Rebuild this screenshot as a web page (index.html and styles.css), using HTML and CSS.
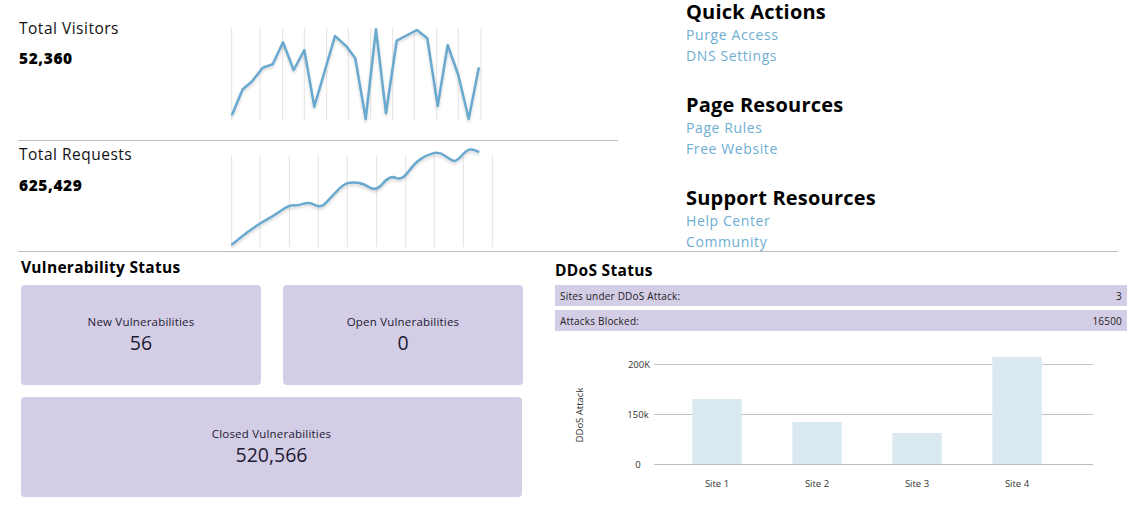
FILE: index.html
```html
<!DOCTYPE html>
<html>
<head>
<meta charset="utf-8">
<link rel="stylesheet" href="styles.css">
</head>
<body>
<div class="top">
  <div class="metrics">
    <div class="metric metric-visitors">
      <div class="info">
        <div class="metric-label">Total Visitors</div>
        <div class="metric-value">52,360</div>
      </div>
      <svg class="spark spark-1" width="260" height="100" viewBox="0 0 260 100">
        <defs>
          <filter id="sh1" x="-10%" y="-10%" width="120%" height="130%">
            <feGaussianBlur in="SourceAlpha" stdDeviation="1.5"/>
            <feOffset dy="2"/>
            <feComponentTransfer><feFuncA type="linear" slope="0.18"/></feComponentTransfer>
            <feMerge><feMergeNode/><feMergeNode in="SourceGraphic"/></feMerge>
          </filter>
        </defs>
        <g class="grid">
          <line x1="5.7" y1="3" x2="5.7" y2="95"/>
          <line x1="34" y1="3" x2="34" y2="95"/>
          <line x1="56.7" y1="3" x2="56.7" y2="95"/>
          <line x1="78.3" y1="3" x2="78.3" y2="95"/>
          <line x1="100.7" y1="3" x2="100.7" y2="95"/>
          <line x1="122.3" y1="3" x2="122.3" y2="95"/>
          <line x1="144.7" y1="3" x2="144.7" y2="95"/>
          <line x1="166.7" y1="3" x2="166.7" y2="95"/>
          <line x1="188.3" y1="3" x2="188.3" y2="95"/>
          <line x1="210.7" y1="3" x2="210.7" y2="95"/>
          <line x1="232.3" y1="3" x2="232.3" y2="95"/>
          <line x1="255" y1="3" x2="255" y2="95"/>
        </g>
        <polyline class="trend" filter="url(#sh1)" points="6.3,89.3 16.7,64.3 25.7,56.7 36.7,42.7 46.7,39.3 57,17.3 67.7,45 78.3,25 88.3,81.7 109,11 120.7,21.7 129.3,33.3 139.7,94 150,4.3 160,88.3 170.7,15.7 191,5 201.3,13.3 211.7,81 221.7,20 232.3,50 242.7,94 252.7,43.3"/>
      </svg>
    </div>
    <div class="metric metric-requests">
      <div class="info">
        <div class="metric-label">Total Requests</div>
        <div class="metric-value">625,429</div>
      </div>
      <svg class="spark spark-2" width="270" height="105" viewBox="0 0 270 105">
        <defs>
          <filter id="sh2" x="-10%" y="-10%" width="120%" height="130%">
            <feGaussianBlur in="SourceAlpha" stdDeviation="1.5"/>
            <feOffset dy="2"/>
            <feComponentTransfer><feFuncA type="linear" slope="0.18"/></feComponentTransfer>
            <feMerge><feMergeNode/><feMergeNode in="SourceGraphic"/></feMerge>
          </filter>
        </defs>
        <g class="grid">
          <line x1="5.7" y1="10" x2="5.7" y2="102"/>
          <line x1="34" y1="10" x2="34" y2="102"/>
          <line x1="63.3" y1="10" x2="63.3" y2="102"/>
          <line x1="92.3" y1="10" x2="92.3" y2="102"/>
          <line x1="121.3" y1="10" x2="121.3" y2="102"/>
          <line x1="150.7" y1="10" x2="150.7" y2="102"/>
          <line x1="179.7" y1="10" x2="179.7" y2="102"/>
          <line x1="208.3" y1="10" x2="208.3" y2="102"/>
          <line x1="237.3" y1="10" x2="237.3" y2="102"/>
          <line x1="266.3" y1="10" x2="266.3" y2="102"/>
        </g>
        <path class="trend" filter="url(#sh2)" d="M6.3 99.3 Q17.3 90 25.65 84.15 Q34 78.3 40.65 74.65 Q47.3 71 55.3 65.5 Q63.3 60 67.8 60.35 Q72.3 60.7 77.8 58.7 Q83.3 56.7 89 60 Q94.7 63.3 99.35 58.3 Q104 53.3 110.65 46.3 Q117.3 39.3 121.5 38.15 Q125.7 37 131.5 37.65 Q137.3 38.3 143.65 42.5 Q150 46.7 157 38.35 Q164 30 169.85 32.85 Q175.7 35.7 182.35 26.7 Q189 17.7 194.85 13.85 Q200.7 10 206.85 8.35 Q213 6.7 218.5 10.5 Q224 14.3 227 15.65 Q230 17 235.35 11 Q240.7 5 243.7 4.5 Q246.7 4 252.3 6.7"/>
      </svg>
    </div>
  </div>
  <div class="resources">
    <section class="res-group">
      <h2 class="res-title">Quick Actions</h2>
      <a class="res-link">Purge Access</a>
      <a class="res-link">DNS Settings</a>
    </section>
    <section class="res-group">
      <h2 class="res-title">Page Resources</h2>
      <a class="res-link">Page Rules</a>
      <a class="res-link">Free Website</a>
    </section>
    <section class="res-group">
      <h2 class="res-title">Support Resources</h2>
      <a class="res-link">Help Center</a>
      <a class="res-link">Community</a>
    </section>
  </div>
</div>

<div class="bottom">
  <div class="vuln">
    <h3 class="section-title">Vulnerability Status</h3>
    <div class="vuln-grid">
      <div class="vcard">
        <div class="vcard-label">New Vulnerabilities</div>
        <div class="vcard-num">56</div>
      </div>
      <div class="vcard">
        <div class="vcard-label">Open Vulnerabilities</div>
        <div class="vcard-num">0</div>
      </div>
      <div class="vcard vcard-wide">
        <div class="vcard-label">Closed Vulnerabilities</div>
        <div class="vcard-num">520,566</div>
      </div>
    </div>
  </div>
  <div class="ddos">
    <h3 class="section-title ddos-title">DDoS Status</h3>
    <div class="drow"><span>Sites under DDoS Attack:</span><span>3</span></div>
    <div class="drow"><span>Attacks Blocked:</span><span>16500</span></div>
    <svg class="bars" width="572" height="182" viewBox="0 0 572 182">
      <g class="hgrid">
        <line x1="99" y1="33.5" x2="538" y2="33.5"/>
        <line x1="99" y1="83.5" x2="538" y2="83.5"/>
      </g>
      <rect class="bar" x="137.3" y="68" width="49.4" height="65.5"/>
      <rect class="bar" x="237.3" y="91" width="49.4" height="42.5"/>
      <rect class="bar" x="337.3" y="102" width="49.4" height="31.5"/>
      <rect class="bar" x="437.3" y="26" width="49.4" height="107.5"/>
      <line class="axis" x1="99" y1="133.5" x2="538" y2="133.5"/>
      <g class="tick">
        <text x="84" y="37">200K</text>
        <text x="83" y="87">150k</text>
        <text x="83" y="137">0</text>
      </g>
      <g class="xlab">
        <text x="162" y="155.5">Site 1</text>
        <text x="262" y="155.5">Site 2</text>
        <text x="362" y="155.5">Site 3</text>
        <text x="462" y="155.5">Site 4</text>
      </g>
      <text class="ylab" x="0" y="0" transform="translate(28 84) rotate(-90)">DDoS Attack</text>
    </svg>
  </div>
</div>
</body>
</html>
```
FILE: styles.css
```css
* { box-sizing: border-box; }
body {
  margin: 0;
  font-family: "Open Sans", "Noto Sans", sans-serif;
  color: #111;
  background: #fff;
  width: 1140px;
  height: 513px;
  overflow: hidden;
}
.top {
  display: flex;
  margin: 0 22px 0 18px;
  height: 252px;
  border-bottom: 1px solid #bdbdbd;
}
.metrics {
  width: 600px;
  display: flex;
  flex-direction: column;
}
.metric {
  display: flex;
}
.metric-visitors {
  height: 141px;
  border-bottom: 1px solid #bdbdbd;
}
.metric-requests {
  height: 110px;
}
.info {
  width: 208px;
  padding-left: 1px;
}
.metric-visitors .info { padding-top: 17px; }
.metric-requests .info { padding-top: 2px; }
.metric-label {
  font-size: 15.5px;
  line-height: 22px;
  letter-spacing: 0.5px;
  color: #111;
}
.metric-value {
  font-size: 15.5px;
  font-weight: 800;
  line-height: 20px;
  letter-spacing: 0.6px;
  margin-top: 9px;
  color: #000;
}
.metric-requests .metric-value { margin-top: 10px; }
.spark { display: block; overflow: visible; }
.spark-1 { margin-top: 25px; }
.spark-2 { margin-top: 4px; }
.grid line { stroke: #e2e2e2; stroke-width: 1; }
.trend {
  fill: none;
  stroke: #6aa9cf;
  stroke-width: 2.5;
  stroke-linejoin: round;
  stroke-linecap: round;
}
.resources {
  margin-left: 68px;
  display: flex;
  flex-direction: column;
  gap: 27px;
  padding-top: 0;
}
.res-group {
  display: flex;
  flex-direction: column;
}
.res-title {
  margin: -1px 0 0;
  font-size: 20px;
  font-weight: 700;
  line-height: 25px;
  letter-spacing: 0.2px;
  color: #000;
}
.res-link {
  font-size: 14px;
  line-height: 21px;
  letter-spacing: 0.6px;
  color: #6eaed3;
}
.bottom {
  display: flex;
  padding-left: 21px;
}
.vuln {
  width: 502px;
}
.section-title {
  margin: 0;
  font-size: 15.5px;
  font-weight: 700;
  line-height: 20px;
  letter-spacing: 0.3px;
  color: #000;
}
.vuln > .section-title { margin-top: 5px; }
.vuln-grid {
  margin-top: 8px;
  display: grid;
  grid-template-columns: 240px 240px;
  grid-template-rows: 100px 100px;
  column-gap: 22px;
  row-gap: 12px;
}
.vcard {
  background: #d4cde6;
  border-radius: 4px;
  display: flex;
  flex-direction: column;
  align-items: center;
  justify-content: center;
  color: #1e1b33;
}
.vcard-wide { grid-column: 1 / 3; width: 501px; }
.vcard-label {
  font-size: 11.5px;
  line-height: 14px;
  letter-spacing: 0.2px;
}
.vcard-num {
  font-size: 19.5px;
  line-height: 24px;
  margin-top: 2px;
}
.ddos {
  margin-left: 32px;
  width: 572px;
}
.ddos-title { margin-top: 8px; margin-bottom: 5px; }
.drow {
  display: flex;
  justify-content: space-between;
  align-items: center;
  height: 21px;
  padding: 0 5px;
  margin-bottom: 4px;
  background: #d4cde6;
  font-size: 10px;
  letter-spacing: 0.2px;
  color: #222;
}
.bars { display: block; margin-top: -4px; }
.hgrid line { stroke: #c4c4c4; stroke-width: 1; }
.axis { stroke: #bdbdbd; stroke-width: 1; }
.bar { fill: #dae8f0; }
.tick text, .xlab text, .ylab {
  font-family: "Open Sans", sans-serif;
  font-size: 9.5px;
  fill: #333;
  text-anchor: middle;
}
```
